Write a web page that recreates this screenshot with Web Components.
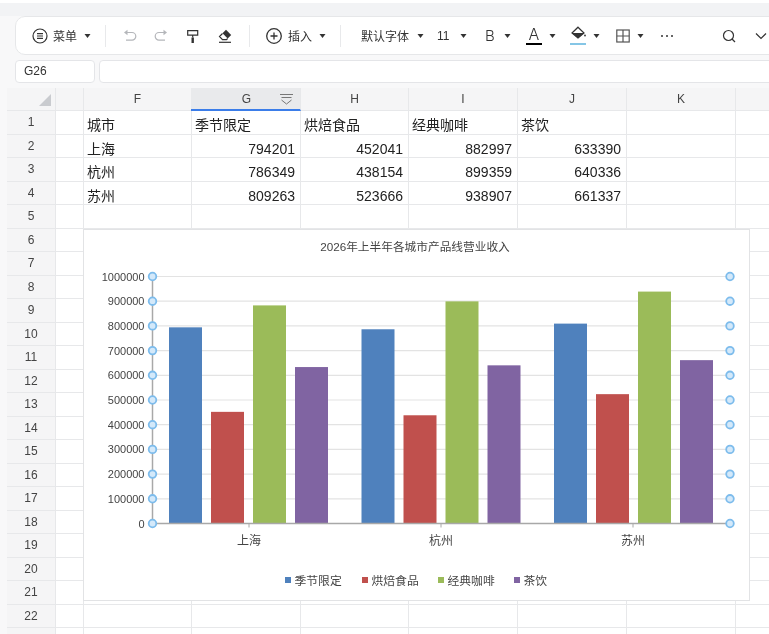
<!DOCTYPE html>
<html lang="zh">
<head>
<meta charset="utf-8">
<title>Sheet</title>
<style>
  html, body { margin: 0; height: 100%; overflow: hidden; background: #f8f8f9; }
  body { font-family: "Liberation Sans", "Noto Sans CJK SC", sans-serif; color: #333; }
</style>
</head>
<body>
<sheet-app></sheet-app>
<script>
const caret = `<svg class="caret" width="7" height="4" viewBox="0 0 7 4"><path d="M.5 0h6L3.500 4z" fill="#333"/></svg>`;
const I = (w, body) => `<svg width="${w}" height="${w}" viewBox="0 0 ${w} ${w}" fill="none" stroke="#333" stroke-width="1.200">${body}</svg>`;

class SheetToolbar extends HTMLElement {
  connectedCallback() {
    this.attachShadow({ mode: 'open' });
    this.shadowRoot.innerHTML = `
      <style>
        :host {
          display: flex;
          align-items: center;
          height: 39px;
          width: 790px;
          margin-left: 15px;
          box-sizing: border-box;
          background: #fff;
          border-radius: 10px;
          border: 1px solid #e6e7e9;
          font-size: 12px;
          color: #333;
          flex: none;
          will-change: transform;
        }
        .t { display: flex; align-items: center; justify-content: center; flex: none; }
        .sep { width: 1px; height: 22px; background: #e8e9eb; flex: none; }
        .caret { flex: none; }
        span { white-space: nowrap; }
        .thin { font-family: Inter, "Liberation Sans", sans-serif; font-weight: 300; }
      </style>
      <div class="t" style="width:16px;margin-left:16px">${I(16, '<circle cx="8" cy="8" r="7"/><path d="M5 5.700h6M5 8h6M5 10.300h6"/>')}</div>
      <span style="margin-left:5px;width:24px">菜单</span>
      <div class="t" style="margin-left:7px">${caret}</div>
      <div class="sep" style="margin-left:14px"></div>
      <div class="t" style="margin-left:17px">${I(14, '<path stroke="#b4b6ba" d="M2 3.500h7a3.800 3.800 0 0 1 0 7.600H3"/><path fill="#b4b6ba" stroke="none" d="M4.500 .8V6.200L1 3.500z"/>')}</div>
      <div class="t" style="margin-left:17px">${I(14, '<path stroke="#b4b6ba" d="M12 3.500H5a3.800 3.800 0 0 0 0 7.600h6"/><path fill="#b4b6ba" stroke="none" d="M9.500 .8V6.200L13 3.500z"/>')}</div>
      <div class="t" style="margin-left:18px">${I(14, '<path d="M1.700 1.700h10v4.400h-10zM6.700 6.100v2.500"/><path fill="#333" stroke="none" d="M5.500 8.500h2.400V14H5.500z"/>')}</div>
      <div class="t" style="margin-left:18px">${I(14, '<path d="M1 13.300h12"/><path fill="#333" stroke="none" d="M8 .8L13.200 6 9.700 9.500 4.500 4.300z"/><path d="M4.500 4.500L1.500 7.500 4.500 10.600H8.500L9.600 9.500"/>')}</div>
      <div class="sep" style="margin-left:17px"></div>
      <div class="t" style="margin-left:16px">${I(16, '<circle cx="8" cy="8" r="7.300" stroke-width="1.300"/><path d="M8 4.500v7M4.500 8h7" stroke-width="1.300"/>')}</div>
      <span style="margin-left:6px;width:24px">插入</span>
      <div class="t" style="margin-left:7px">${caret}</div>
      <div class="sep" style="margin-left:14px"></div>
      <span style="margin-left:20px;width:48px">默认字体</span>
      <div class="t" style="margin-left:8px">${caret}</div>
      <span style="margin-left:13px;width:15px">11</span>
      <div class="t" style="margin-left:8px">${caret}</div>
      <span class="thin" style="margin-left:18px;width:11px;font-size:15px">B</span>
      <div class="t" style="margin-left:8px">${caret}</div>
      <div class="t" style="margin-left:15px;flex-direction:column;width:16px;height:20px;justify-content:flex-start"><span class="thin" style="font-size:16px;line-height:16px">A</span><i style="display:block;width:16px;height:2.500px;background:#000;margin-top:1px"></i></div>
      <div class="t" style="margin-left:7px">${caret}</div>
      <div class="t" style="margin-left:14px;flex-direction:column;width:16px;height:20px;justify-content:flex-start">${I(15, '<path fill="#fff" d="M7 1.200L13 7 7 12 1 7z"/><path fill="#333" stroke="none" d="M1 7h12L7 12.200z"/><circle cx="14" cy="9.500" r=".9" fill="#333" stroke="none"/>')}<i style="display:block;width:16px;height:2.500px;background:#85c6e6;margin-top:2px"></i></div>
      <div class="t" style="margin-left:7px">${caret}</div>
      <div class="t" style="margin-left:16px">${I(14, '<rect x=".8" y="1" width="12.400" height="12" stroke="#555"/><path d="M7 1v12M.8 7h12.400" stroke="#555"/>')}</div>
      <div class="t" style="margin-left:7px">${caret}</div>
      <div class="t" style="margin-left:16px;width:14px;gap:3px"><i style="width:2px;height:2px;background:#333;border-radius:50%"></i><i style="width:2px;height:2px;background:#333;border-radius:50%"></i><i style="width:2px;height:2px;background:#333;border-radius:50%"></i></div>
      <div class="t" style="margin-left:48px">${I(14, '<circle cx="6.500" cy="6.500" r="5"/><path d="M10 10l3 3"/>')}</div>
      <div class="t" style="margin-left:18px">${I(14, '<path d="M2 4.500l5 5 5-5"/>')}</div>
    `;
  }
}
customElements.define('sheet-toolbar', SheetToolbar);

class FormulaBar extends HTMLElement {
  connectedCallback() {
    this.attachShadow({ mode: 'open' });
    this.shadowRoot.innerHTML = `
      <style>
        :host { display: flex; gap: 4px; height: 23px; margin: 5px 0 0 15px; flex: none; will-change: transform; }
        div { background: #fff; border: 1px solid #e4e5e8; border-radius: 4px; box-sizing: border-box; font-size: 12px; line-height: 21px; }
        .name { width: 80px; padding-left: 8px; color: #333; flex: none; }
        .input { width: 700px; flex: none; }
      </style>
      <div class="name"><slot></slot></div>
      <div class="input"></div>
    `;
  }
}
customElements.define('formula-bar', FormulaBar);

class SheetGrid extends HTMLElement {
  connectedCallback() {
    const cols = ['F', 'G', 'H', 'I', 'J', 'K', ''];
    const data = [
      ['城市', '季节限定', '烘焙食品', '经典咖啡', '茶饮'],
      ['上海', 794201, 452041, 882997, 633390],
      ['杭州', 786349, 438154, 899359, 640336],
      ['苏州', 809263, 523666, 938907, 661337],
    ];
    let html = `<div class="h corner"><svg width="12" height="12" viewBox="0 0 12 12"><path d="M12 0v12H0z" fill="#c9cbcf"/></svg></div><div class="h"></div>`;
    for (const c of cols) html += `<div class="h ${c === 'G' ? 'sel' : ''}">${c}${c === 'G' ? '<svg class="flt" width="13" height="11" viewBox="0 0 13 11" fill="none" stroke="#777"><path d="M0 .5h13M1.500 3.500h10M1.500 6l5 4 5-4"/></svg>' : ''}</div>`;
    for (let r = 0; r < 23; r++) {
      html += `<div class="rn">${r < 22 ? r + 1 : ''}</div><div class="c"></div>`;
      for (let c = 0; c < cols.length; c++) {
        const v = data[r] ? data[r][c] : undefined;
        html += `<div class="c ${typeof v === 'number' ? 'num' : ''}">${v === undefined ? '' : v}</div>`;
      }
    }
    this.attachShadow({ mode: 'open' });
    this.shadowRoot.innerHTML = `
      <style>
        :host { display: block; position: relative; margin: 5px 0 0 7px; flex: none; will-change: transform; }
        .grid {
          display: grid;
          grid-template-columns: 49px 28px 108px 109px 108px 109px 109px 109px 60px;
          grid-template-rows: 23px repeat(23, 23.500px);
        }
        .grid > div { box-sizing: border-box; overflow: hidden; white-space: nowrap; }
        .h {
          background: #f5f5f6;
          border-right: 1px solid #e7e8ea;
          border-bottom: 1px solid #e7e8ea;
          display: flex; align-items: center; justify-content: center;
          font-size: 12px; color: #444; position: relative;
        }
        .corner { justify-content: flex-end; align-items: flex-end; padding: 0 4px 4px 0; }
        .sel { background: #e9eaec; border-bottom: 2px solid #3b7de9; margin-left: -1px; padding-left: 2px; }
        .flt { position: absolute; right: 7px; top: 6px; }
        .rn {
          background: #f5f5f6;
          border-right: 1px solid #e7e8ea;
          border-bottom: 1px solid #e7e8ea;
          display: flex; align-items: center; justify-content: center;
          font-size: 12px; color: #444;
        }
        .c {
          background: #fff;
          border-right: 1px solid #e7e8ea;
          border-bottom: 1px solid #e7e8ea;
          font-size: 14px; color: #222;
          padding: 3px 5px 0 3px;
          line-height: 23px;
        }
        .num { text-align: right; }
        ::slotted(*) { position: absolute; left: 76px; top: 141px; }
      </style>
      <div class="grid">${html}</div>
      <slot></slot>
    `;
  }
}
customElements.define('sheet-grid', SheetGrid);

class RevenueChart extends HTMLElement {
  connectedCallback() {
    const cats = ['上海', '杭州', '苏州'];
    const series = [
      ['季节限定', '#4f81bd', [794201, 786349, 809263]],
      ['烘焙食品', '#c0504d', [452041, 438154, 523666]],
      ['经典咖啡', '#9bbb59', [882997, 899359, 938907]],
      ['茶饮', '#8064a2', [633390, 640336, 661337]],
    ];
    // chart-local coordinates; the svg starts at 84,230 on the page
    const left = 68.5, right = 646, top = 46.5, bottom = 293.5;
    const y = v => bottom - (bottom - top) * v / 1000000;
    const groupX = [85, 277.500, 470];
    let s = '';
    for (let i = 0; i <= 10; i++) {
      const v = i * 100000, py = y(v);
      if (i) s += `<line x1="${left}" x2="${right}" y1="${py}" y2="${py}" stroke="#e3e3e3" stroke-width="1.200"/>`;
      s += `<text x="60.500" y="${py + 4}" text-anchor="end" font-size="11" fill="#444">${v}</text>`;
    }
    series.forEach((ser, si) => {
      cats.forEach((c, ci) => {
        const x = groupX[ci] + si * 42;
        s += `<rect x="${x}" y="${y(ser[2][ci])}" width="33" height="${bottom - y(ser[2][ci])}" fill="${ser[1]}"/>`;
      });
    });
    s += `<line x1="${left}" x2="${left}" y1="${top}" y2="${bottom}" stroke="#a8a8a8" stroke-width="1.500"/>`;
    s += `<line x1="${left}" x2="${right}" y1="${bottom}" y2="${bottom}" stroke="#a8a8a8" stroke-width="1.500"/>`;
    cats.forEach((c, ci) => {
      const x = 165 + ci * 192;
      s += `<line x1="${x}" x2="${x}" y1="${bottom}" y2="${bottom + 4}" stroke="#a8a8a8"/>`;
      s += `<text x="${x}" y="${bottom + 21}" text-anchor="middle" font-size="12" fill="#444">${c}</text>`;
    });
    for (let i = 0; i <= 10; i++) {
      for (const x of [left, right]) {
        s += `<circle cx="${x}" cy="${y(i * 100000)}" r="3.800" fill="#d4e9fa" stroke="#7dbcec" stroke-width="1.800"/>`;
      }
    }
    const lx = [201, 278, 354, 430];
    series.forEach((ser, i) => {
      s += `<rect x="${lx[i]}" y="347" width="6" height="6" fill="${ser[1]}"/>`;
      s += `<text x="${lx[i] + 9.5}" y="355" font-size="11.800" fill="#444">${ser[0]}</text>`;
    });
    this.attachShadow({ mode: 'open' });
    this.shadowRoot.innerHTML = `
      <style>
        :host { display: block; width: 667px; height: 372px; box-sizing: border-box; background: #fff; border: 1px solid #e2e3e5; }
        svg { display: block; font-family: "Liberation Sans", "Noto Sans CJK SC", sans-serif; }
      </style>
      <svg width="665" height="370" viewBox="0 0 665 370">
        <text x="331" y="21" text-anchor="middle" font-size="11.700" fill="#444">${this.textContent.trim()}</text>
        ${s}
      </svg>
    `;
  }
}
customElements.define('revenue-chart', RevenueChart);

class SheetApp extends HTMLElement {
  connectedCallback() {
    this.attachShadow({ mode: 'open' });
    this.shadowRoot.innerHTML = `
      <style>
        :host { display: flex; flex-direction: column; width: 769px; height: 634px; overflow: hidden; background: #f8f8f9; }
        .top { height: 3px; background: #fff; flex: none; }
        .band { height: 13px; background: #f2f3f5; flex: none; }
      </style>
      <div class="top"></div>
      <div class="band"></div>
      <sheet-toolbar></sheet-toolbar>
      <formula-bar>G26</formula-bar>
      <sheet-grid><revenue-chart>2026年上半年各城市产品线营业收入</revenue-chart></sheet-grid>
    `;
  }
}
customElements.define('sheet-app', SheetApp);
</script>
</body>
</html>
